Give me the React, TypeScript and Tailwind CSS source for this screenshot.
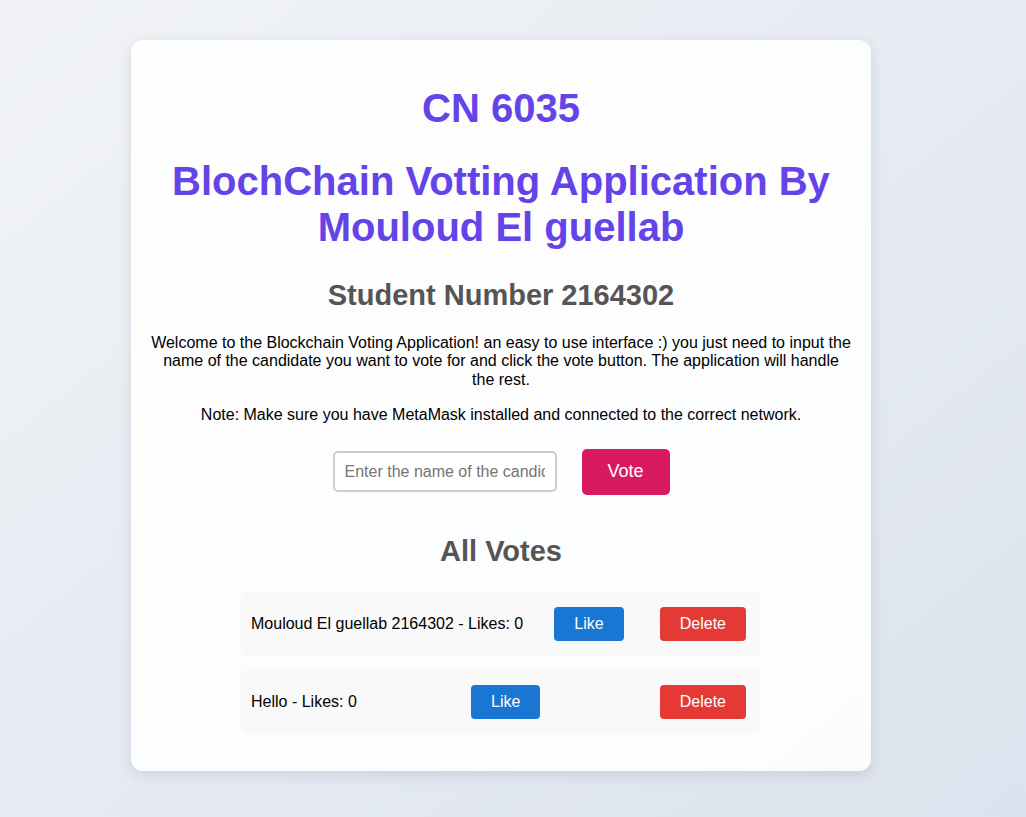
import { useState } from "react";

type Vote = { name: string; likes: number };

export default function App() {
  const [name, setName] = useState("");
  const [votes, setVotes] = useState<Vote[]>([
    { name: "Mouloud El guellab 2164302", likes: 0 },
    { name: "Hello", likes: 0 },
  ]);

  const addVote = () => {
    if (!name.trim()) return;
    setVotes([...votes, { name: name.trim(), likes: 0 }]);
    setName("");
  };

  return (
    <div className="min-h-screen w-full bg-gradient-to-br from-[#f1f3f6] to-[#dce3ee] pt-[40px] pb-[46px] font-['Liberation_Sans',Arial,sans-serif]">
      <div className="ml-[131px] w-[740px] rounded-[12px] bg-white/90 px-[20px] pt-[20px] pb-[37px] text-center shadow-[0_4px_14px_rgba(30,40,70,0.12)]">
        <h1 className="mt-[25px] text-[40px] font-bold leading-[46px] text-[#6443e8]">CN 6035</h1>
        <h1 className="mt-[27px] text-[40px] font-bold leading-[46px] text-[#6443e8]">
          BlochChain Votting Application By Mouloud El guellab
        </h1>

        <h2 className="mt-[28px] text-[29px] font-bold leading-[34px] text-[#555555]">Student Number 2164302</h2>

        <p className="mt-[22px] text-base leading-[18.4px] text-black">
          Welcome to the Blockchain Voting Application! an easy to use interface :) you just need to input the name of
          the candidate you want to vote for and click the vote button. The application will handle the rest.
        </p>
        <p className="mt-[17px] text-base leading-[18.4px] text-black">
          Note: Make sure you have MetaMask installed and connected to the correct network.
        </p>

        <div className="mt-[24px] flex items-center justify-center gap-[25px]">
          <input
            value={name}
            onChange={(e) => setName(e.target.value)}
            placeholder="Enter the name of the candidate"
            className="h-[41px] w-[224px] rounded-[5px] border-2 border-[#cccccc] bg-white px-[10px] text-base text-black outline-none placeholder:text-[#757575]"
          />
          <button
            onClick={addVote}
            className="flex h-[46px] w-[88px] items-center justify-center rounded-[5px] bg-[#d81b60] text-[18px] text-white"
          >
            Vote
          </button>
        </div>

        <h2 className="mt-[39px] text-[29px] font-bold leading-[34px] text-[#555555]">All Votes</h2>

        <div className="mx-auto mt-[24px] flex w-[520px] flex-col gap-[14px]">
          {votes.map((v, i) => (
            <div
              key={i}
              className="flex h-[64px] items-center justify-between rounded-[5px] bg-[#f9f9f9] px-[10px] text-base text-black"
            >
              <span>
                {v.name} - Likes: {v.likes}
              </span>
              <button
                onClick={() => setVotes(votes.map((x, j) => (j === i ? { ...x, likes: x.likes + 1 } : x)))}
                className="mx-[5px] flex h-[34px] items-center rounded-[4px] bg-[#1976d2] px-[20px] text-white"
              >
                Like
              </button>
              <button
                onClick={() => setVotes(votes.filter((_, j) => j !== i))}
                className="mx-[5px] flex h-[34px] items-center rounded-[4px] bg-[#e53935] px-[20px] text-white"
              >
                Delete
              </button>
            </div>
          ))}
        </div>
      </div>
    </div>
  );
}
